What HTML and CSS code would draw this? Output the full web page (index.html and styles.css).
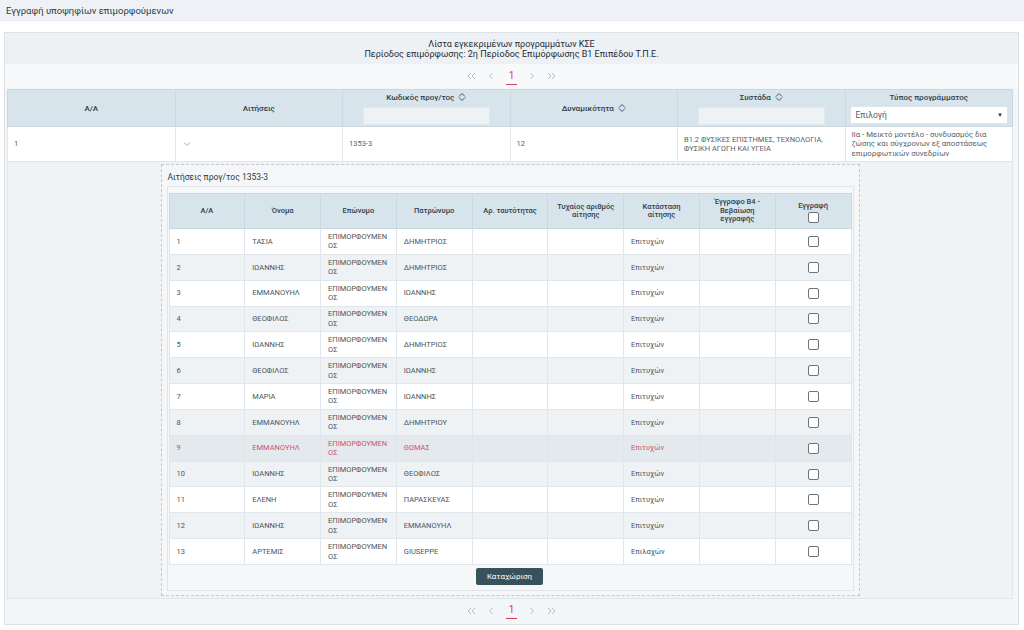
FILE: index.html
```html
<!DOCTYPE html>
<html lang="el">
<head>
<meta charset="utf-8">
<title>Εγγραφή υποψηφίων επιμορφούμενων</title>
<link rel="stylesheet" href="styles.css">
</head>
<body>
<div class="topbar">Εγγραφή υποψηφίων επιμορφούμενων</div>
<div class="wrap">
  <div class="panel">
    <div class="panel-head">
      <div>Λίστα εγκεκριμένων προγραμμάτων ΚΣΕ</div>
      <div>Περίοδος επιμόρφωσης: 2η Περίοδος Επιμόρφωσης Β1 Επιπέδου Τ.Π.Ε.</div>
    </div>
    <div class="pager">
      <svg class="pg" width="9" height="8" viewBox="0 0 9 8"><path d="M4 1L1 4L4 7M8 1L5 4L8 7" fill="none" stroke="currentColor" stroke-width="1"/></svg>
      <svg class="pg" width="6" height="8" viewBox="0 0 6 8"><path d="M4.5 1L1.5 4L4.5 7" fill="none" stroke="currentColor" stroke-width="1"/></svg>
      <span class="pg-num">1</span>
      <svg class="pg" width="6" height="8" viewBox="0 0 6 8"><path d="M1.5 1L4.5 4L1.5 7" fill="none" stroke="currentColor" stroke-width="1"/></svg>
      <svg class="pg" width="9" height="8" viewBox="0 0 9 8"><path d="M1 1L4 4L1 7M5 1L8 4L5 7" fill="none" stroke="currentColor" stroke-width="1"/></svg>
    </div>
    <table class="main">
      <thead>
        <tr>
          <th>Α/Α</th>
          <th>Αιτήσεις</th>
          <th><div class="hl">Κωδικός προγ/τος <svg class="sort" width="8" height="10" viewBox="0 0 8 10"><path d="M1 4.5L4 1.5L7 4.5M1 5.5L4 8.5L7 5.5" fill="none" stroke="currentColor" stroke-width="1"/></svg></div><div class="filter"></div></th>
          <th>Δυναμικότητα <svg class="sort" width="8" height="10" viewBox="0 0 8 10"><path d="M1 4.5L4 1.5L7 4.5M1 5.5L4 8.5L7 5.5" fill="none" stroke="currentColor" stroke-width="1"/></svg></th>
          <th><div class="hl">Συστάδα <svg class="sort" width="8" height="10" viewBox="0 0 8 10"><path d="M1 4.5L4 1.5L7 4.5M1 5.5L4 8.5L7 5.5" fill="none" stroke="currentColor" stroke-width="1"/></svg></div><div class="filter"></div></th>
          <th><div class="hl">Τύπος προγράμματος</div><div class="select"><span>Επιλογή</span><span class="caret">▼</span></div></th>
        </tr>
      </thead>
      <tbody>
        <tr class="prog">
          <td>1</td>
          <td class="chev"><svg width="8" height="6" viewBox="0 0 8 6"><path d="M1 1.5L4 4.5L7 1.5" fill="none" stroke="#a7b0b8" stroke-width="1"/></svg></td>
          <td>1353-3</td>
          <td>12</td>
          <td>Β1.2 ΦΥΣΙΚΕΣ ΕΠΙΣΤΗΜΕΣ, ΤΕΧΝΟΛΟΓΙΑ, ΦΥΣΙΚΗ ΑΓΩΓΗ ΚΑΙ ΥΓΕΙΑ</td>
          <td class="type">ΙΙα - Μεικτό μοντέλο - συνδυασμός δια ζώσης και σύγχρονων εξ αποστάσεως επιμορφωτικών συνεδρίων</td>
        </tr>
        <tr class="expand">
          <td colspan="6">
            <div class="sub">
              <div class="sub-title">Αιτήσεις προγ/τος 1353-3</div>
              <div class="sub-box">
                <table class="apps">
                  <thead>
                    <tr>
                      <th>Α/Α</th>
                      <th>Όνομα</th>
                      <th>Επώνυμο</th>
                      <th>Πατρώνυμο</th>
                      <th>Αρ. ταυτότητας</th>
                      <th>Τυχαίος αριθμός αίτησης</th>
                      <th>Κατάσταση αίτησης</th>
                      <th>Έγγραφο Β4 - Βεβαίωση εγγραφής</th>
                      <th class="reg">Εγγραφή<span class="cb"></span></th>
                    </tr>
                  </thead>
                  <tbody>
                    <tr><td>1</td><td>ΤΑΣΙΑ</td><td class="sn">ΕΠΙΜΟΡΦΟΥΜΕΝΟΣ</td><td>ΔΗΜΗΤΡΙΟΣ</td><td></td><td></td><td class="st">Επιτυχών</td><td></td><td class="c"><span class="cb"></span></td></tr>
                    <tr><td>2</td><td>ΙΩΑΝΝΗΣ</td><td class="sn">ΕΠΙΜΟΡΦΟΥΜΕΝΟΣ</td><td>ΔΗΜΗΤΡΙΟΣ</td><td></td><td></td><td class="st">Επιτυχών</td><td></td><td class="c"><span class="cb"></span></td></tr>
                    <tr><td>3</td><td>ΕΜΜΑΝΟΥΗΛ</td><td class="sn">ΕΠΙΜΟΡΦΟΥΜΕΝΟΣ</td><td>ΙΩΑΝΝΗΣ</td><td></td><td></td><td class="st">Επιτυχών</td><td></td><td class="c"><span class="cb"></span></td></tr>
                    <tr><td>4</td><td>ΘΕΟΦΙΛΟΣ</td><td class="sn">ΕΠΙΜΟΡΦΟΥΜΕΝΟΣ</td><td>ΘΕΟΔΩΡΑ</td><td></td><td></td><td class="st">Επιτυχών</td><td></td><td class="c"><span class="cb"></span></td></tr>
                    <tr><td>5</td><td>ΙΩΑΝΝΗΣ</td><td class="sn">ΕΠΙΜΟΡΦΟΥΜΕΝΟΣ</td><td>ΔΗΜΗΤΡΙΟΣ</td><td></td><td></td><td class="st">Επιτυχών</td><td></td><td class="c"><span class="cb"></span></td></tr>
                    <tr><td>6</td><td>ΘΕΟΦΙΛΟΣ</td><td class="sn">ΕΠΙΜΟΡΦΟΥΜΕΝΟΣ</td><td>ΙΩΑΝΝΗΣ</td><td></td><td></td><td class="st">Επιτυχών</td><td></td><td class="c"><span class="cb"></span></td></tr>
                    <tr><td>7</td><td>ΜΑΡΙΑ</td><td class="sn">ΕΠΙΜΟΡΦΟΥΜΕΝΟΣ</td><td>ΙΩΑΝΝΗΣ</td><td></td><td></td><td class="st">Επιτυχών</td><td></td><td class="c"><span class="cb"></span></td></tr>
                    <tr><td>8</td><td>ΕΜΜΑΝΟΥΗΛ</td><td class="sn">ΕΠΙΜΟΡΦΟΥΜΕΝΟΣ</td><td>ΔΗΜΗΤΡΙΟΥ</td><td></td><td></td><td class="st">Επιτυχών</td><td></td><td class="c"><span class="cb"></span></td></tr>
                    <tr class="hi"><td>9</td><td>ΕΜΜΑΝΟΥΗΛ</td><td class="sn">ΕΠΙΜΟΡΦΟΥΜΕΝΟΣ</td><td>ΘΩΜΑΣ</td><td></td><td></td><td class="st">Επιτυχών</td><td></td><td class="c"><span class="cb"></span></td></tr>
                    <tr><td>10</td><td>ΙΩΑΝΝΗΣ</td><td class="sn">ΕΠΙΜΟΡΦΟΥΜΕΝΟΣ</td><td>ΘΕΟΦΙΛΟΣ</td><td></td><td></td><td class="st">Επιτυχών</td><td></td><td class="c"><span class="cb"></span></td></tr>
                    <tr><td>11</td><td>ΕΛΕΝΗ</td><td class="sn">ΕΠΙΜΟΡΦΟΥΜΕΝΟΣ</td><td>ΠΑΡΑΣΚΕΥΑΣ</td><td></td><td></td><td class="st">Επιτυχών</td><td></td><td class="c"><span class="cb"></span></td></tr>
                    <tr><td>12</td><td>ΙΩΑΝΝΗΣ</td><td class="sn">ΕΠΙΜΟΡΦΟΥΜΕΝΟΣ</td><td>ΕΜΜΑΝΟΥΗΛ</td><td></td><td></td><td class="st">Επιτυχών</td><td></td><td class="c"><span class="cb"></span></td></tr>
                    <tr><td>13</td><td>ΑΡΤΕΜΙΣ</td><td class="sn">ΕΠΙΜΟΡΦΟΥΜΕΝΟΣ</td><td>GIUSEPPE</td><td></td><td></td><td class="st">Επιλαχών</td><td></td><td class="c"><span class="cb"></span></td></tr>
                  </tbody>
                </table>
                <div class="actions"><button class="btn" type="button">Καταχώριση</button></div>
              </div>
            </div>
          </td>
        </tr>
      </tbody>
    </table>
    <div class="pager bottom">
      <svg class="pg" width="9" height="8" viewBox="0 0 9 8"><path d="M4 1L1 4L4 7M8 1L5 4L8 7" fill="none" stroke="currentColor" stroke-width="1"/></svg>
      <svg class="pg" width="6" height="8" viewBox="0 0 6 8"><path d="M4.5 1L1.5 4L4.5 7" fill="none" stroke="currentColor" stroke-width="1"/></svg>
      <span class="pg-num">1</span>
      <svg class="pg" width="6" height="8" viewBox="0 0 6 8"><path d="M1.5 1L4.5 4L1.5 7" fill="none" stroke="currentColor" stroke-width="1"/></svg>
      <svg class="pg" width="9" height="8" viewBox="0 0 9 8"><path d="M1 1L4 4L1 7M5 1L8 4L5 7" fill="none" stroke="currentColor" stroke-width="1"/></svg>
    </div>
  </div>
</div>
</body>
</html>
```
FILE: styles.css
```css
* { box-sizing: border-box; }
html, body { margin: 0; padding: 0; }
body {
  width: 1024px;
  height: 630px;
  overflow: hidden;
  background: #f4f6f8;
  font-family: Roboto, "Noto Sans", sans-serif;
  color: #4a5560;
  font-size: 8px;
}
.topbar {
  height: 21px;
  line-height: 22px;
  padding-left: 6px;
  background: #eef2f6;
  border-bottom: 1px solid #e6eaee;
  color: #2d3c48;
  font-size: 9.5px;
}
.wrap {
  background: #ffffff;
  padding: 11px 5px 4px 4px;
  height: 609px;
}
.panel {
  border: 1px solid #dce3e8;
  background: #f3f6f8;
  padding: 0 4px 0 2px;
  height: 593px;
}
.panel-head {
  margin: 0 -4px 0 -2px;
  height: 31px;
  padding-top: 6px;
  background: #edf1f4;
  text-align: center;
  color: #1f2c38;
  font-size: 9px;
  line-height: 10px;
}
.pager {
  margin: 0 -4px 0 -2px;
  height: 24px;
  background: #f7f9fb;
  display: flex;
  align-items: center;
  justify-content: center;
  gap: 12px;
  color: #b3bcc5;
}
.pager.bottom {
  height: 24px;
  background: transparent;
  margin-top: 0;
}
.pg { display: block; }
.pg-num {
  color: #d8405a;
  font-size: 10px;
  line-height: 12px;
  padding: 0 3px 2px;
  border-bottom: 1px solid #d8405a;
  margin-top: 2px;
}
table { border-collapse: collapse; table-layout: fixed; }
.main { width: 1006px; margin-top: 1px; }
.main th {
  height: 37px;
  background: #d7e4ec;
  border: 1px solid #c9d8e2;
  color: #2f3e4a;
  font-weight: 500;
  font-size: 8px;
  text-align: center;
  vertical-align: middle;
  padding: 0 4px;
}
.hl { line-height: 10px; }
.sort { vertical-align: -2px; margin-left: 2px; color: #47566a; }
.filter {
  width: 127px;
  height: 18px;
  margin: 4px auto 0;
  background: #eef2f5;
  border: 1px solid #e2e8ec;
}
.select {
  height: 18px;
  margin: 3px 0 0;
  background: #ffffff;
  border: 1px solid #dfe5ea;
  display: flex;
  justify-content: space-between;
  align-items: center;
  padding: 0 4px 0 5px;
  font-weight: 400;
  color: #555f69;
  font-size: 8.5px;
}
.caret { font-size: 6px; color: #333; }
.prog td {
  height: 35px;
  background: #ffffff;
  border: 1px solid #e0e6ea;
  padding: 0 6px;
  font-size: 7.5px;
  line-height: 9.5px;
  color: #555f69;
  vertical-align: middle;
}
.prog td.type { padding-right: 14px; font-size: 7.8px; }
.prog td.chev { padding-left: 7px; }
.prog td.chev svg { display: block; }
.expand > td {
  padding: 2px 0 2px;
  background: #f0f3f6;
  border: 1px solid #e0e6ea;
}
.sub {
  width: 699px;
  margin: 0 auto;
  border: 1px dashed #c3c9ce;
  background: #f4f6f8;
  padding: 7px 5px 4px 5px;
}
.sub-title {
  color: #2d3a46;
  font-size: 8.5px;
  line-height: 11px;
  margin-left: 1px;
  margin-bottom: 3px;
}
.sub-box {
  border: 1px solid #dfe5ea;
  background: #f5f7f9;
  padding: 6px 2px 5px 1px;
}
.apps { width: 683px; }
.apps th {
  height: 35px;
  background: #d7e4ec;
  border: 1px solid #c9d8e2;
  color: #2f3e4a;
  font-weight: 500;
  font-size: 7.5px;
  line-height: 8.5px;
  text-align: center;
  vertical-align: middle;
  padding: 0 4px;
}
.apps th.reg { vertical-align: top; padding-top: 8px; }
.apps th.reg .cb { display: block; margin: 1px auto 0; }
.apps td {
  height: 25.85px;
  border: 1px solid #e0e6ea;
  background: #ffffff;
  padding: 0 7px;
  font-size: 7.5px;
  line-height: 9.5px;
  color: #4a5560;
  vertical-align: middle;
}
.apps tbody tr:nth-child(even) td { background: #eef2f5; }
.apps tbody tr.hi td { background: #e4e9ed; color: #d2506a; }
.apps td.sn { word-break: break-all; padding-right: 5px; }
.apps td.c { text-align: center; }
.cb {
  display: inline-block;
  width: 11px;
  height: 11px;
  border: 1px solid #6c747b;
  border-radius: 2px;
  background: #ffffff;
  vertical-align: middle;
}
.actions {
  display: flex;
  justify-content: center;
  padding-top: 3px;
}
.btn {
  height: 17px;
  padding: 0 11px;
  border: 0;
  border-radius: 2px;
  background: #37525a;
  color: #ffffff;
  font-family: Roboto, "Noto Sans", sans-serif;
  font-size: 8px;
}
```
